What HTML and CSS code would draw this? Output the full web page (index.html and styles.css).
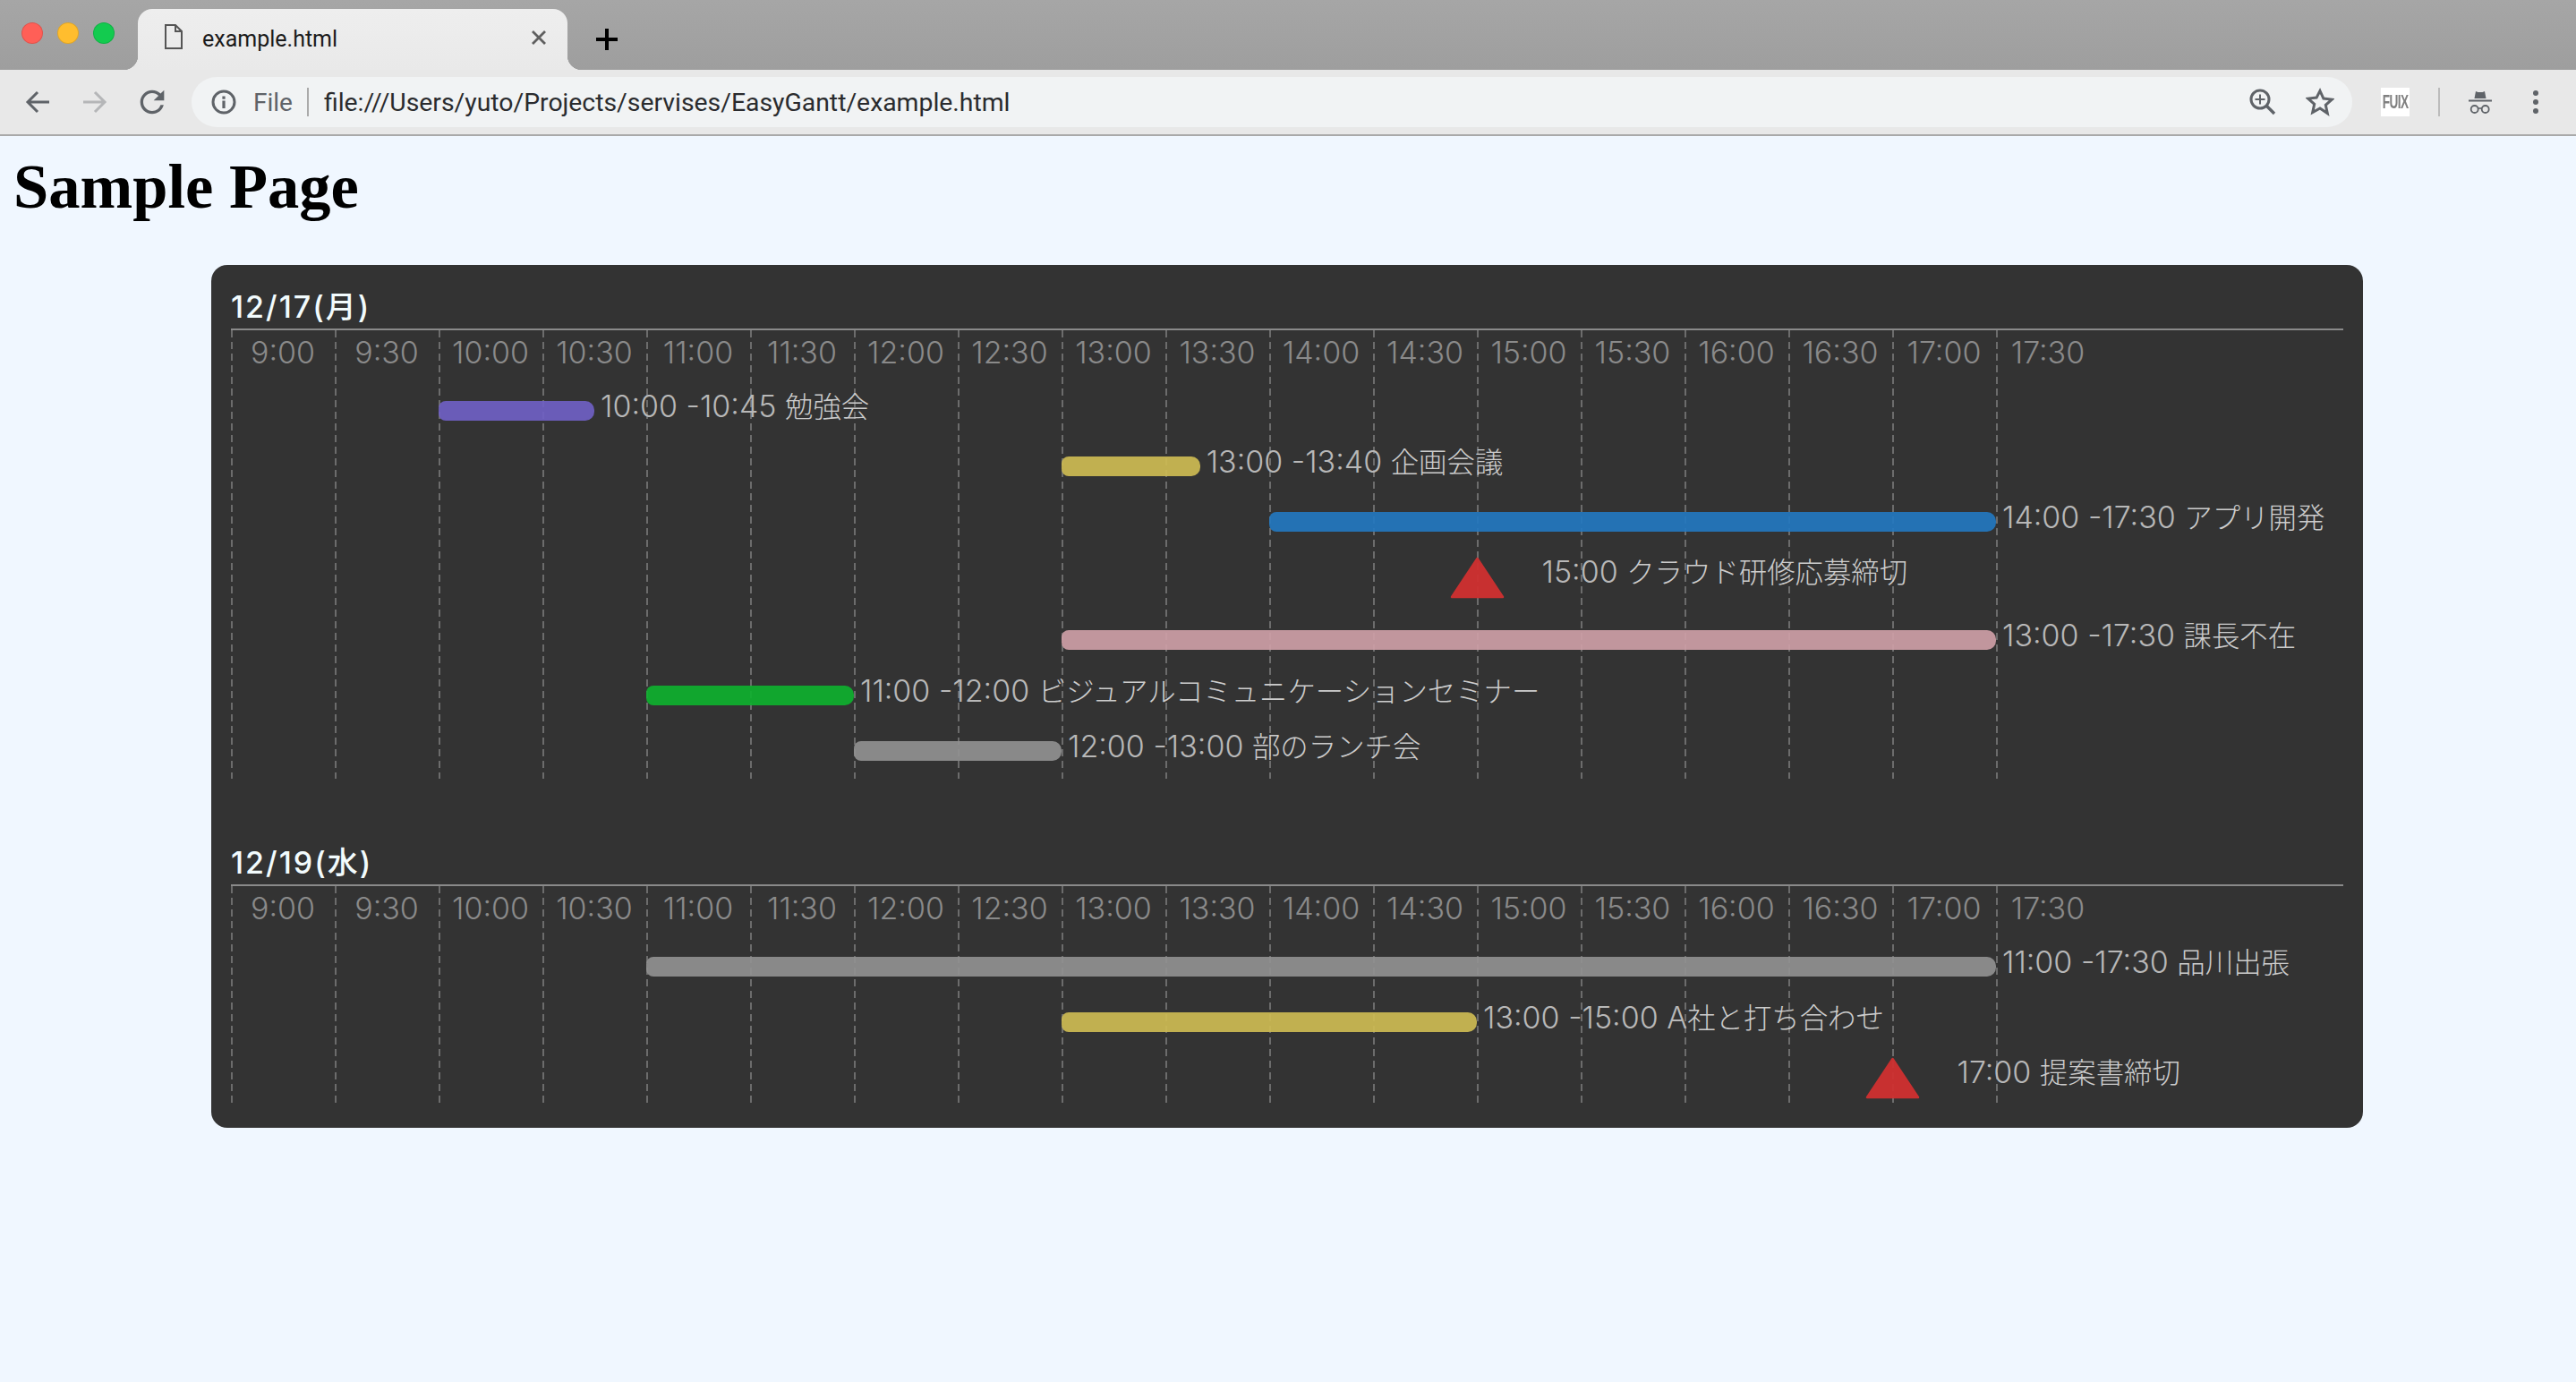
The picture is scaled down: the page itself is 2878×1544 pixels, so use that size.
FILE: index.html
```html
<!DOCTYPE html>
<html lang="en">
<head>
    <meta charset="UTF-8">
    <title>example.html</title>
    <link rel="stylesheet" href="styles.css">
</head>
<body>
    <div class="tabbar">
        <div class="lights">
            <span class="light red"></span>
            <span class="light yellow"></span>
            <span class="light green"></span>
        </div>
        <div class="tab">
            <svg class="file-icon" viewBox="0 0 20 28" width="20" height="28">
                <path d="M1 1h11l7 7v19H1z M12 1v7h7" fill="none" stroke="#555" stroke-width="2"/>
            </svg>
            <span class="tab-title">example.html</span>
            <svg class="tab-close" viewBox="0 0 16 16" width="16" height="16">
                <path d="M1 1l14 14M15 1L1 15" stroke="#5f5f5f" stroke-width="2.8"/>
            </svg>
        </div>
        <svg class="new-tab" viewBox="0 0 24 24" width="24" height="24">
            <path d="M12 0v24M0 12h24" stroke="#000" stroke-width="4"/>
        </svg>
    </div>

    <div class="toolbar">
        <svg class="nav-icon" viewBox="0 0 28 26" width="28" height="26">
            <path d="M27 13H3M14 2L3 13l11 11" fill="none" stroke="#5f6368" stroke-width="3"/>
        </svg>
        <svg class="nav-icon" viewBox="0 0 28 26" width="28" height="26">
            <path d="M1 13h24M14 2l11 11-11 11" fill="none" stroke="#b5b6b8" stroke-width="3"/>
        </svg>
        <svg class="nav-icon reload" viewBox="0 0 24 24" width="40" height="40">
            <path fill="#5f6368" d="M17.65 6.35A7.958 7.958 0 0 0 12 4c-4.42 0-7.99 3.58-7.99 8s3.57 8 7.99 8c3.73 0 6.84-2.55 7.73-6h-2.08A5.99 5.99 0 0 1 12 18c-3.31 0-6-2.69-6-6s2.69-6 6-6c1.66 0 3.14.69 4.22 1.78L13 11h7V4l-2.35 2.35z"/>
        </svg>
        <div class="address">
            <svg viewBox="0 0 28 28" width="28" height="28">
                <circle cx="14" cy="14" r="12" fill="none" stroke="#5f6368" stroke-width="3"/>
                <path d="M12.4 7.5h3.2v3.2h-3.2zM12.4 12.5h3.2v8.5h-3.2z" fill="#5f6368"/>
            </svg>
            <span class="scheme">File</span>
            <span class="address-sep"></span>
            <span class="url">file:///Users/yuto/Projects/servises/EasyGantt/example.html</span>
            <svg class="zoom-icon" viewBox="0 0 30 30" width="30" height="30">
                <circle cx="12" cy="12" r="10" fill="none" stroke="#5f6368" stroke-width="3"/>
                <path d="M12 6.5v11M6.5 12h11" stroke="#5f6368" stroke-width="2"/>
                <path d="M19 19l9 9" stroke="#5f6368" stroke-width="3.4"/>
            </svg>
            <svg class="star-icon" viewBox="0 0 32 32" width="32" height="32">
                <path d="M16 3.5l3.9 8.6 9.4 1-7 6.3 2 9.2L16 23l-8.3 4.6 2-9.2-7-6.3 9.4-1z" fill="none" stroke="#5f6368" stroke-width="3"/>
            </svg>
        </div>
        <div class="ext-badge"><span>FUIX</span></div>
        <span class="toolbar-sep"></span>
        <svg class="incognito" viewBox="0 0 30 30" width="30" height="30">
            <path d="M10 3l2.5 1h5l2.5-1 1.5 8h-13z" fill="#5f6368"/>
            <path d="M2 12.5h26v2H2z" fill="#5f6368"/>
            <circle cx="8.7" cy="23" r="4" fill="none" stroke="#5f6368" stroke-width="1.8"/>
            <circle cx="20.7" cy="23" r="4" fill="none" stroke="#5f6368" stroke-width="1.8"/>
            <path d="M12.7 22h4" stroke="#5f6368" stroke-width="1.6"/>
        </svg>
        <div class="menu-dots"><span></span><span></span><span></span></div>
    </div>

    <div class="page">
        <h1>Sample Page</h1>

        <div class="gantt">
            <div class="day">
                <div class="day-title">12/17(<span class="jp">月</span>)</div>
                <div class="chart">
                    <div class="lines">
                        <i></i><i></i><i></i><i></i><i></i><i></i><i></i><i></i><i></i>
                        <i></i><i></i><i></i><i></i><i></i><i></i><i></i><i></i><i></i>
                    </div>
                    <div class="hours">
                        <span>9:00</span><span>9:30</span><span>10:00</span><span>10:30</span><span>11:00</span><span>11:30</span>
                        <span>12:00</span><span>12:30</span><span>13:00</span><span>13:30</span><span>14:00</span><span>14:30</span>
                        <span>15:00</span><span>15:30</span><span>16:00</span><span>16:30</span><span>17:00</span><span>17:30</span>
                    </div>
                    <div class="row">
                        <div class="bar purple" style="margin-left:232px;width:174px"></div>
                        <div class="label">10:00 -10:45 <span class="jp">勉強会</span></div>
                    </div>
                    <div class="row">
                        <div class="bar yellow" style="margin-left:928px;width:154.67px"></div>
                        <div class="label">13:00 -13:40 <span class="jp">企画会議</span></div>
                    </div>
                    <div class="row">
                        <div class="bar blue" style="margin-left:1160px;width:812px"></div>
                        <div class="label">14:00 -17:30 <span class="jp">アプリ開発</span></div>
                    </div>
                    <div class="row mile tall">
                        <svg class="milestone" style="margin-left:1361.5px" viewBox="0 0 61 47" width="61" height="47">
                            <path d="M30.5 2L2 45h57z" fill="#d03030" stroke="#d03030" stroke-width="2.5" stroke-linejoin="round"/>
                        </svg>
                        <div class="label milestone-label">15:00 <span class="jp">クラウド研修応募締切</span></div>
                    </div>
                    <div class="row">
                        <div class="bar pink" style="margin-left:928px;width:1044px"></div>
                        <div class="label">13:00 -17:30 <span class="jp">課長不在</span></div>
                    </div>
                    <div class="row">
                        <div class="bar green" style="margin-left:464px;width:232px"></div>
                        <div class="label">11:00 -12:00 <span class="jp">ビジュアルコミュニケーションセミナー</span></div>
                    </div>
                    <div class="row">
                        <div class="bar gray" style="margin-left:696px;width:232px"></div>
                        <div class="label">12:00 -13:00 <span class="jp">部のランチ会</span></div>
                    </div>
                </div>
            </div>

            <div class="day">
                <div class="day-title">12/19(<span class="jp">水</span>)</div>
                <div class="chart">
                    <div class="lines">
                        <i></i><i></i><i></i><i></i><i></i><i></i><i></i><i></i><i></i>
                        <i></i><i></i><i></i><i></i><i></i><i></i><i></i><i></i><i></i>
                    </div>
                    <div class="hours">
                        <span>9:00</span><span>9:30</span><span>10:00</span><span>10:30</span><span>11:00</span><span>11:30</span>
                        <span>12:00</span><span>12:30</span><span>13:00</span><span>13:30</span><span>14:00</span><span>14:30</span>
                        <span>15:00</span><span>15:30</span><span>16:00</span><span>16:30</span><span>17:00</span><span>17:30</span>
                    </div>
                    <div class="row">
                        <div class="bar gray" style="margin-left:464px;width:1508px"></div>
                        <div class="label">11:00 -17:30 <span class="jp">品川出張</span></div>
                    </div>
                    <div class="row">
                        <div class="bar yellow" style="margin-left:928px;width:464px"></div>
                        <div class="label">13:00 -15:00 A<span class="jp">社と打ち合わせ</span></div>
                    </div>
                    <div class="row mile">
                        <svg class="milestone" style="margin-left:1825.5px" viewBox="0 0 61 47" width="61" height="47">
                            <path d="M30.5 2L2 45h57z" fill="#d03030" stroke="#d03030" stroke-width="2.5" stroke-linejoin="round"/>
                        </svg>
                        <div class="label milestone-label">17:00 <span class="jp">提案書締切</span></div>
                    </div>
                </div>
            </div>
        </div>
    </div>
</body>
</html>
```

FILE: styles.css
```css
body {
    margin: 0;
    background-color: #f0f7ff;
    font-family: Inter, "Noto Sans CJK JP", sans-serif;
    overflow: hidden;
}

/* browser window */
.tabbar {
    display: flex;
    align-items: flex-end;
    height: 78px;
    box-sizing: border-box;
    background: linear-gradient(#a6a6a6, #9e9e9e);
}
.lights {
    display: flex;
    gap: 16px;
    width: 154px;
    box-sizing: border-box;
    padding: 0 0 29px 24px;
}
.light {
    width: 24px;
    height: 24px;
    box-sizing: border-box;
    border-radius: 50%;
    border: 1px solid rgba(0, 0, 0, 0.12);
}
.light.red { background-color: #ff5f57; }
.light.yellow { background-color: #ffbd2e; }
.light.green { background-color: #13cb4f; }
.tab {
    position: relative;
    display: flex;
    align-items: center;
    width: 480px;
    height: 68px;
    box-sizing: border-box;
    padding: 0 24px 0 30px;
    border-radius: 16px 16px 0 0;
    background: linear-gradient(#eeeeee, #e9e9e9);
}
.tab::before,
.tab::after {
    content: "";
    position: absolute;
    bottom: 0;
    width: 16px;
    height: 16px;
}
.tab::before {
    left: -16px;
    background: radial-gradient(circle at 0 0, transparent 16px, #e9e9e9 16.5px);
}
.tab::after {
    right: -16px;
    background: radial-gradient(circle at 100% 0, transparent 16px, #e9e9e9 16.5px);
}
.file-icon {
    margin-bottom: 6px;
}
.tab-title {
    margin-left: 22px;
    flex: 1;
    padding-bottom: 2px;
    font-family: Roboto, sans-serif;
    font-size: 25px;
    color: #1b1b1b;
}
.tab-close {
    margin-bottom: 4px;
}
.new-tab {
    margin: 0 0 22px 32px;
}

.toolbar {
    display: flex;
    align-items: center;
    height: 74px;
    box-sizing: border-box;
    border-bottom: 2px solid #a9a9a9;
    background-color: #e8e8e8;
    padding-left: 28px;
}
.nav-icon {
    margin-right: 36px;
}
.nav-icon.reload {
    margin-left: -6px;
    margin-right: 0;
}
.address {
    display: flex;
    align-items: center;
    width: 2414px;
    height: 56px;
    margin-left: 24px;
    box-sizing: border-box;
    padding: 0 20px 0 22px;
    border-radius: 28px;
    background-color: #f1f3f4;
}
.scheme {
    margin-left: 19px;
    font-family: Roboto, sans-serif;
    font-size: 28px;
    color: #5f6368;
}
.address-sep {
    width: 2px;
    height: 32px;
    margin: 0 17px 0 16px;
    background-color: #aaaaaa;
}
.url {
    flex: 1;
    font-family: Roboto, sans-serif;
    font-size: 28.35px;
    color: #2a2b2e;
}
.star-icon {
    margin-left: 33px;
}
.ext-badge {
    display: flex;
    align-items: center;
    justify-content: center;
    width: 32px;
    height: 32px;
    margin-left: 32px;
    background-color: #fff;
    overflow: hidden;
}
.ext-badge span {
    transform: scaleX(0.62);
    font-family: "Liberation Sans", sans-serif;
    font-size: 22px;
    font-weight: bold;
    letter-spacing: -1px;
    color: #808080;
    filter: blur(0.7px);
}
.toolbar-sep {
    width: 2px;
    height: 32px;
    margin: 0 30px 0 32px;
    background-color: #bcbcbc;
}
.menu-dots {
    display: flex;
    flex-direction: column;
    gap: 4px;
    margin-left: 44px;
}
.menu-dots span {
    width: 6px;
    height: 6px;
    border-radius: 50%;
    background-color: #5f6368;
}

/* page */
h1 {
    margin: 0;
    padding: 0 0 0 15px;
    font-family: "Liberation Serif", serif;
    font-size: 70.5px;
    line-height: 112px;
    height: 144px;
    box-sizing: border-box;
    font-weight: bold;
    color: #000;
}

/* gantt */
.gantt {
    width: 2404px;
    height: 964px;
    box-sizing: border-box;
    margin-left: 236px;
    padding: 27px 22px;
    border-radius: 18px;
    background-color: #333333;
}
.day + .day {
    margin-top: 74px;
}
.day-title {
    height: 44px;
    line-height: 40px;
    border-bottom: 2px solid #8a8a8a;
    font-size: 34px;
    font-weight: 500;
    letter-spacing: 2px;
    color: #f2fbfd;
}
.day-title .jp {
    font-size: 34px;
}
.chart {
    position: relative;
}
.lines {
    position: absolute;
    top: 0;
    bottom: 0;
    left: 0;
    display: flex;
}
.lines i {
    display: block;
    width: 116px;
    height: 100%;
    background: repeating-linear-gradient(to bottom, #6c6c6c 0, #6c6c6c 8px, transparent 8px, transparent 13px) no-repeat left top / 2px 100%;
}
.hours {
    display: flex;
    height: 59px;
    font-size: 34px;
    font-weight: 300;
    line-height: 50px;
    color: #8a8a8a;
}
.hours span {
    width: 116px;
    flex: none;
    text-align: center;
}
.row {
    position: relative;
    display: flex;
    align-items: center;
    height: 62px;
}
.row.mile {
    align-items: flex-start;
}
.row.tall {
    height: 70px;
}
.bar {
    flex: none;
    height: 22px;
    border-radius: 8px 10px 10px 8px;
    opacity: 0.9;
}
.bar.purple { background-color: #7060c7; }
.bar.yellow { background-color: #d0be53; }
.bar.blue { background-color: #2279c2; }
.bar.pink { background-color: #d0a1a8; }
.bar.green { background-color: #0db22e; }
.bar.gray { background-color: #929292; }
.label {
    flex: none;
    margin: 0 0 10px 7px;
    font-size: 34px;
    font-weight: 300;
    line-height: 46px;
    white-space: nowrap;
    color: #b8b8b8;
}
.label .jp {
    font-size: 31.4px;
    color: #cccccc;
}
.milestone {
    flex: none;
    margin-top: 8px;
    opacity: 0.95;
}
.milestone-label {
    margin: 2px 0 0 42px;
}
```
